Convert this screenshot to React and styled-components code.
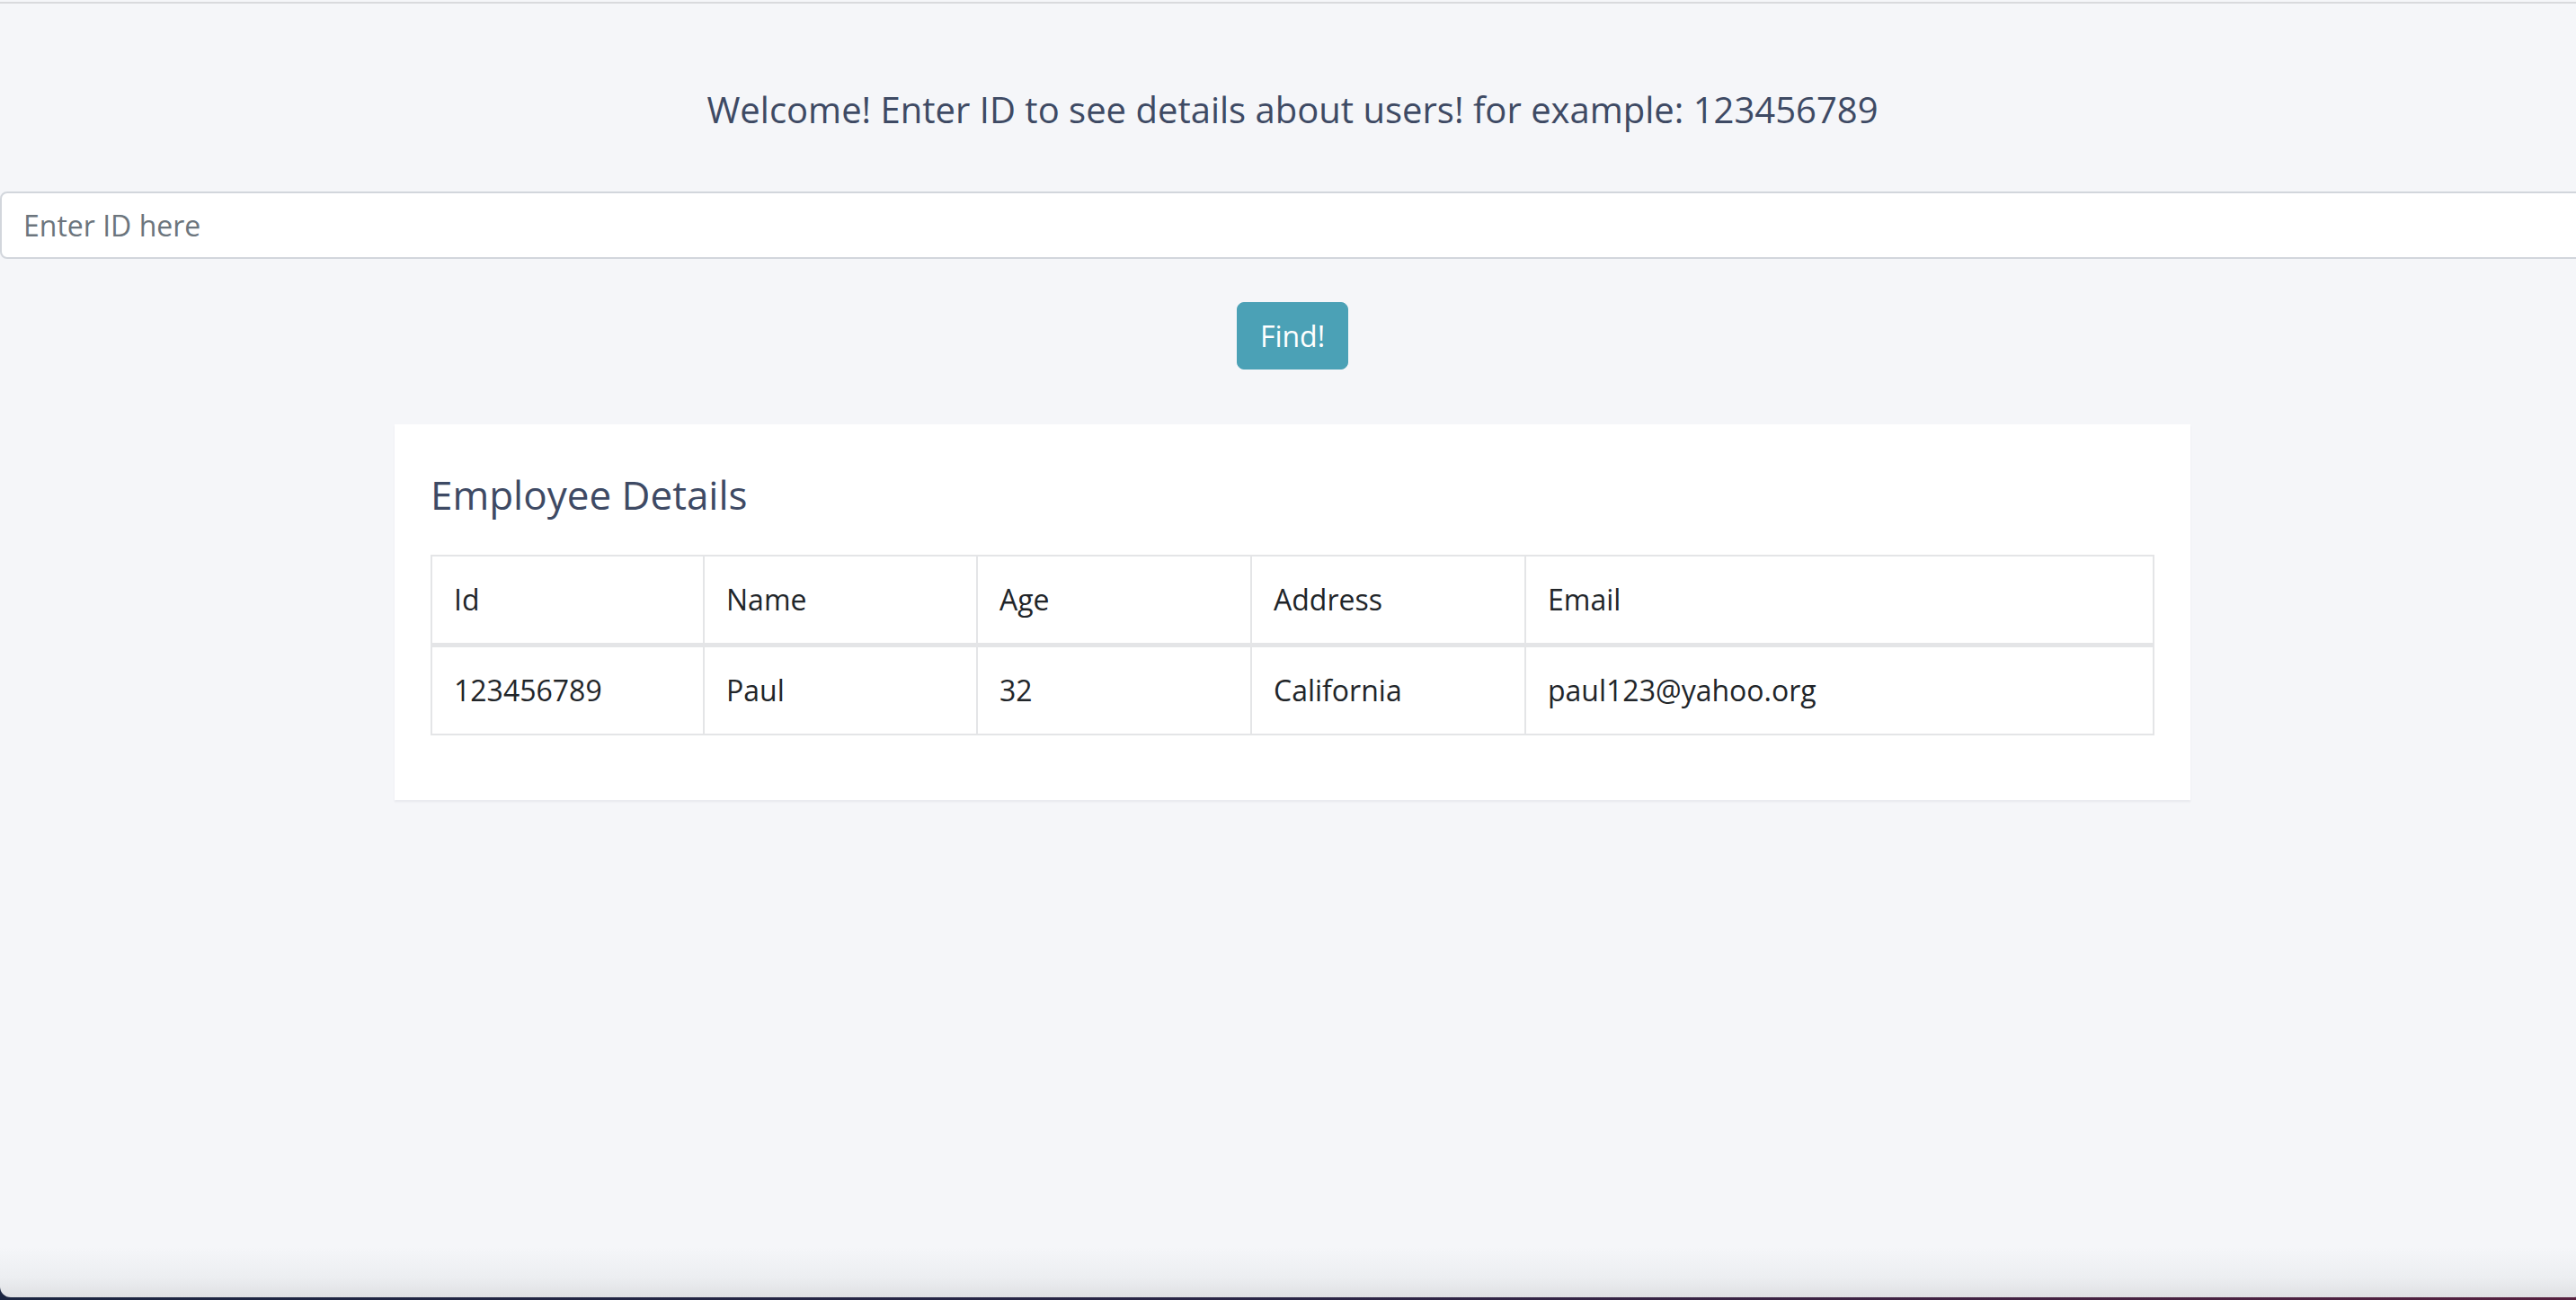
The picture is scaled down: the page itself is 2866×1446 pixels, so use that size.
import React from "react";
import styled, { createGlobalStyle } from "styled-components";

const GlobalStyle = createGlobalStyle`
  html, body {
    margin: 0;
    padding: 0;
  }
  body {
    background: linear-gradient(to right, #1b2541, #2a2546 50%, #55203f);
    font-family: "Open Sans", "Liberation Sans", sans-serif;
    overflow: hidden;
  }
  * {
    box-sizing: border-box;
  }
`;

// the page runs a little past the right edge of the shot, so it is 10px wider
const Window = styled.div`
  width: calc(100% + 10px);
  height: 1443px;
  display: flex;
  flex-direction: column;
  background: linear-gradient(
    to bottom,
    #f5f6f9 calc(100% - 56px),
    #eceef1 calc(100% - 22px),
    #dfe0e3 100%
  );
  border-radius: 0 0 12px 12px;
  overflow: hidden;
`;

const TopRule = styled.div`
  height: 2px;
  margin-top: 2px;
  background: #d9dadd;
`;

const Welcome = styled.h5`
  margin: 94px 0 0;
  font-size: 40px;
  font-weight: 400;
  line-height: 1.2;
  color: #3e4a64;
  text-align: center;
`;

const IdInput = styled.input`
  display: block;
  width: 100%;
  height: 75px;
  margin-top: 67px;
  padding: 12px 24px;
  font-family: "Open Sans", "Liberation Sans", sans-serif;
  font-size: 32px;
  line-height: 1.5;
  color: #495057;
  background: #fff;
  border: 2px solid #d2d6dc;
  border-radius: 8px;
  outline: none;

  &::placeholder {
    color: #6c757d;
  }
`;

const ButtonRow = styled.div`
  display: flex;
  justify-content: center;
  margin-top: 48px;
`;

const FindButton = styled.button`
  height: 75px;
  padding: 0 25px;
  font-family: "Open Sans", "Liberation Sans", sans-serif;
  font-size: 32px;
  line-height: 1.5;
  color: #fff;
  background: #4ba1b6;
  border: 1px solid #4ba1b6;
  border-radius: 8px;
  cursor: pointer;
`;

const Card = styled.section`
  width: 1998px;
  margin: 61px 0 0 calc(50% - 999px);
  padding: 52px 40px 40px;
  background: #fff;
  box-shadow: 0 2px 2px rgba(30, 40, 60, 0.06);
`;

const CardTitle = styled.h4`
  margin: 0 0 40px;
  font-size: 44px;
  font-weight: 400;
  line-height: 1.2;
  color: #3e4a64;
`;

const Table = styled.table`
  width: 100%;
  margin-bottom: 32px;
  border-collapse: collapse;
  table-layout: fixed;
  color: #212529;
  font-size: 32px;
  line-height: 1.5;
`;

const Th = styled.th`
  width: ${(p) => p.$width || "auto"};
  padding: 24px;
  text-align: left;
  font-weight: 400;
  border: 2px solid #e4e5e7;
  border-bottom-width: 5px;
`;

const Td = styled.td`
  padding: 24px;
  border: 2px solid #e4e5e7;
`;

const columns = [
  { label: "Id", width: "303px" },
  { label: "Name", width: "304px" },
  { label: "Age", width: "305px" },
  { label: "Address", width: "305px" },
  { label: "Email" },
];

const rows = [
  ["123456789", "Paul", "32", "California", "paul123@yahoo.org"],
];

export default function App() {
  return (
    <>
      <GlobalStyle />
      <Window>
        <TopRule />
        <Welcome>
          Welcome! Enter ID to see details about users! for example: 123456789
        </Welcome>
        <IdInput placeholder="Enter ID here" />
        <ButtonRow>
          <FindButton>Find!</FindButton>
        </ButtonRow>
        <Card>
          <CardTitle>Employee Details</CardTitle>
          <Table>
            <thead>
              <tr>
                {columns.map((c) => (
                  <Th key={c.label} $width={c.width}>
                    {c.label}
                  </Th>
                ))}
              </tr>
            </thead>
            <tbody>
              {rows.map((r) => (
                <tr key={r[0]}>
                  {r.map((cell, i) => (
                    <Td key={i}>{cell}</Td>
                  ))}
                </tr>
              ))}
            </tbody>
          </Table>
        </Card>
      </Window>
    </>
  );
}
